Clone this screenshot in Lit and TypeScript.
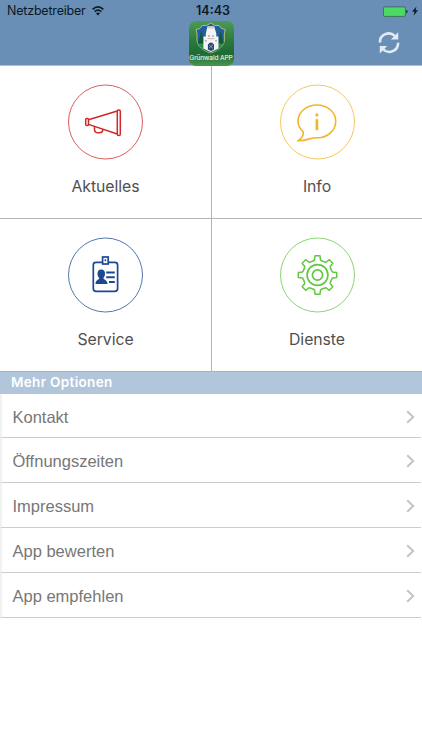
import { LitElement, html, css, svg } from "lit";
import { customElement, property } from "lit/decorators.js";

const gearPath = (() => {
  const pts: string[] = [];
  for (let i = 0; i < 8; i++) {
    const a = (i * Math.PI) / 4;
    for (const [x, y] of [[-4.6, -14], [-3, -15], [-2.5, -19.2], [2.5, -19.2], [3, -15], [4.6, -14]]) {
      const px = 37.5 + x * Math.cos(a) - y * Math.sin(a);
      const py = 38 + x * Math.sin(a) + y * Math.cos(a);
      pts.push(`${px.toFixed(2)} ${py.toFixed(2)}`);
    }
  }
  return `M${pts.join("L")}Z`;
})();

const glyphs: Record<string, unknown> = {
  megaphone: svg`
    <rect x="17.7" y="34.6" width="2.8" height="6.8" rx="1"/>
    <rect x="49.3" y="25.9" width="3" height="25.6" rx="1.3"/>
    <path d="M20.5 35.7L49.3 27M20.5 40.4L49.3 50"/>
    <path d="M26.5 42.4V45.2Q26.5 48.8 30.2 48.8H31.4Q34.6 48.8 35 45.4"/>`,
  info: svg`
    <path d="M23.1 47.7C19.8 44.7 18 41.3 18 37.3C18 28.2 26.3 21 36.9 21S55.7 28.2 55.7 37.3C55.7 46.9 46.8 54.6 36.3 53.7C30.5 53.6 25.2 57.3 18.3 56.6C21.5 54.3 23.9 50.8 23.1 47.7Z" stroke-width="1.6"/>
    <path d="M36.9 35.2V46.3" stroke-width="2.7"/>
    <circle cx="36.9" cy="30.9" r="1.6" fill="currentColor" stroke="none"/>`,
  badge: svg`
    <path d="M34 25.4H28Q25.3 25.4 25.3 28V51.4Q25.3 54.3 28 54.3H46.8Q49.6 54.3 49.6 51.4V28Q49.6 25.4 46.8 25.4H41" stroke-width="1.7"/>
    <rect x="34.6" y="20" width="5.6" height="7" stroke-width="1.7"/>
    <path d="M37.4 22.3V24.2" stroke-width="1.7"/>
    <path d="M33.2 32.6C36 32.6 37.2 34.5 37 37C36.9 39 36 40.2 35.5 41C35.5 43 39.4 42.4 39.5 47.1H27.5C27.5 42.4 31.2 43 31.2 41C30.3 40.1 29.5 38.8 29.5 37C29.4 34.5 30.5 32.6 33.2 32.6Z" fill="currentColor" stroke="none"/>
    <path d="M38.2 35.6H46.8M38.2 40.2H46.8M41 45H46.8" stroke-width="2"/>`,
  gear: svg`
    <path d=${gearPath} stroke-width="1.5" stroke-linejoin="round"/>
    <circle cx="37.5" cy="38" r="10.4" stroke-width="1.7"/>
    <circle cx="37.5" cy="38" r="5.1" stroke-width="1.7"/>`,
};

@customElement("status-bar")
class StatusBar extends LitElement {
  static styles = css`
    :host { display: grid; grid-template-columns: 1fr auto 1fr; height: 21px; align-items: center; padding: 1px 4px 0 7px; box-sizing: border-box; color: #0c1824; font: 12.5px/20px Inter, sans-serif; }
    .left, .right { display: flex; align-items: center; }
    .left { gap: 6px; letter-spacing: -0.2px; }
    .right { justify-content: flex-end; gap: 4px; }
    .time { font-weight: 600; letter-spacing: 0; margin-left: 1px; }
    svg { display: block; }
  `;
  render() {
    return html`
      <div class="left"><span>Netzbetreiber</span>
        <svg width="12" height="10" viewBox="0 0 12 10" fill="none" stroke="currentColor" stroke-width="1.6">
          <path d="M.6 3.3Q6-1.4 11.4 3.3M2.6 5.6Q6 2.6 9.4 5.6"/>
          <path d="M6 9.4L3.9 7.2Q6 5.6 8.1 7.2Z" fill="currentColor" stroke="none"/>
        </svg>
      </div>
      <span class="time">14:43</span>
      <div class="right">
        <svg width="25" height="11" viewBox="0 0 25 11">
          <rect x=".4" y=".9" width="22" height="9.5" rx="1.3" fill="#4cd964" stroke="#34664f" stroke-width=".8"/>
          <path d="M23.2 3.7Q24.8 4 24.8 5.6T23.2 7.4Z" fill="#263d50"/>
        </svg>
        <svg width="6" height="10" viewBox="0 0 6 10"><path d="M4.5.4L0 5.6H2.5L1.5 9.7L6 4.2H3.5Z" fill="#0c1824"/></svg>
      </div>`;
  }
}

@customElement("app-logo")
class AppLogo extends LitElement {
  static styles = css`
    :host { display: flex; flex-direction: column; align-items: center; width: 45px; height: 45px; border-radius: 7px; overflow: hidden; background: linear-gradient(#4c9a55, #2a7a3c 45%, #1d6a33 72%, #4a9650); }
    svg { display: block; flex: none; }
    .name { font: 400 6.6px/9px Inter, sans-serif; color: #fff; white-space: nowrap; letter-spacing: -0.12px; }
  `;
  render() {
    return html`
      <svg width="45" height="33" viewBox="0 0 45 33">
        <path d="M7 8.6Q11.4 8.4 13.2 4.6Q18 5.6 21.7 2Q25.4 5.6 30.2 4.6Q32 8.4 36.2 8.6Q34.8 13 35.4 18C35.8 25 29 30 21.7 32C14.4 30 7.6 25 8 18Q8.6 13 7 8.6Z" fill="#235da0" stroke="#d9cf7a" stroke-width=".8"/>
        <path d="M8.4 20.5Q21.7 15.5 35 20.5C33.2 27 28 30.2 21.7 31.6C15.4 30.2 10.2 27 8.4 20.5Z" fill="#2f8a4c"/>
        <path d="M12.3 10L8.8 22.5H16ZM31.4 10L27.8 22.5H34.8Z" fill="#0f5a3c"/>
        <path d="M16.8 12.5L18.4 5.4H25.2L27.3 12.5V15.5H29.5V27.5L21.8 31L14.4 27.5V15.5H16.8Z" fill="#f3f3f5"/>
        <path d="M18.2 7.5L18.9 5.2H24.9L25.7 7.5Z" fill="#c6ced8"/>
        <path d="M19.4 14.2H20.6V15.8H19.4ZM23.4 14.2H24.6V15.8H23.4ZM16.4 19H17.4V20.6H16.4ZM26.5 19H27.5V20.6H26.5Z" fill="#777c8a"/>
        <path d="M18.5 17.6H25.5" stroke="#c9807a" stroke-width=".6"/>
        <path d="M18.9 28.5V23.4Q22 19.6 25 23.4V28.5L22 30Z" fill="#26456f"/>
        <path d="M20.2 27L24 23.5M20.3 24L24 27.5" stroke="#a9b8d0" stroke-width=".8"/>
      </svg>
      <span class="name">Grünwald APP</span>`;
  }
}

@customElement("menu-tile")
class MenuTile extends LitElement {
  @property() label = "";
  @property() icon = "";
  static styles = css`
    :host { display: flex; flex-direction: column; align-items: center; padding-top: 18px; background: #fff; color: #cf2828; }
    :host([icon="info"]) { color: #f2b52a; }
    :host([icon="badge"]) { color: #1c4a91; }
    :host([icon="gear"]) { color: #62c840; }
    svg { display: block; flex: none; }
    .ring { stroke-width: 1; opacity: .75; }
    .label { margin-top: 16px; font: 15.8px/22px Inter, sans-serif; letter-spacing: -0.05px; color: #505050; }
  `;
  render() {
    return html`
      <svg width="75" height="76" viewBox="0 0 75 76" fill="none" stroke="currentColor" stroke-width="1.5">
        <circle class="ring" cx="37.5" cy="38" r="37"/>
        ${glyphs[this.icon]}
      </svg>
      <span class="label">${this.label}</span>`;
  }
}

@customElement("app-root")
class AppRoot extends LitElement {
  static styles = css`
    :host { display: flex; flex-direction: column; width: 422px; height: 750px; background: #fff; overflow: hidden; }
    header { height: 65px; flex: none; background: #698fb7; border-bottom: 1px solid #b9bdc4; }
    .nav { display: grid; grid-template-columns: 1fr auto 1fr; height: 45px; }
    .nav app-logo { grid-column: 2; }
    .refresh { justify-self: end; margin: 10px 22px 0 0; display: block; }
    .tiles { display: grid; grid-template-columns: 211px 210px; grid-template-rows: 152px 152px; gap: 1px; background: #b4b4b4; border-bottom: 1px solid #aab2ba; flex: none; }
    .section { height: 22px; flex: none; background: #b2c6db; padding-left: 11px; color: #fff; font: 600 13.5px/21px Inter, sans-serif; letter-spacing: 0.33px; }
    .row { height: 45px; flex: none; box-sizing: border-box; display: flex; align-items: center; justify-content: space-between; margin-right: 1px; padding: 2px 6px 0 10.5px; border-left: 2px solid #f2f2f2; border-bottom: 1px solid #cdcdcd; color: #777; font: 16.5px/22px "Liberation Sans", sans-serif; }
    .section + .row { height: 44px; }
    .row svg { display: block; }
  `;
  render() {
    const tiles = [["Aktuelles", "megaphone"], ["Info", "info"], ["Service", "badge"], ["Dienste", "gear"]];
    const rows = ["Kontakt", "Öffnungszeiten", "Impressum", "App bewerten", "App empfehlen"];
    return html`
      <header>
        <status-bar></status-bar>
        <div class="nav">
          <app-logo></app-logo>
          <svg class="refresh" width="22" height="24" viewBox="0 0 22 24" fill="none" stroke="#e2eaf4" stroke-width="2.6">
            <path d="M1.9 11.4A8.8 8.8 0 0 1 16.8 4.9M20.1 11.8A8.8 8.8 0 0 1 5.2 18.4"/>
            <path d="M20.2 1.2V8.6H12.8ZM1.8 22.4V15H9.2Z" fill="#e2eaf4" stroke="none"/>
          </svg>
        </div>
      </header>
      <div class="tiles">${tiles.map(([l, i]) => html`<menu-tile label=${l} icon=${i}></menu-tile>`)}</div>
      <div class="section">Mehr Optionen</div>
      ${rows.map((r) => html`<div class="row"><span>${r}</span>
        <svg width="9" height="14" viewBox="0 0 9 14" fill="none" stroke="#c4c4c7" stroke-width="2"><path d="M1.2 1.2L7.2 7L1.2 12.8"/></svg>
      </div>`)}`;
  }
}
